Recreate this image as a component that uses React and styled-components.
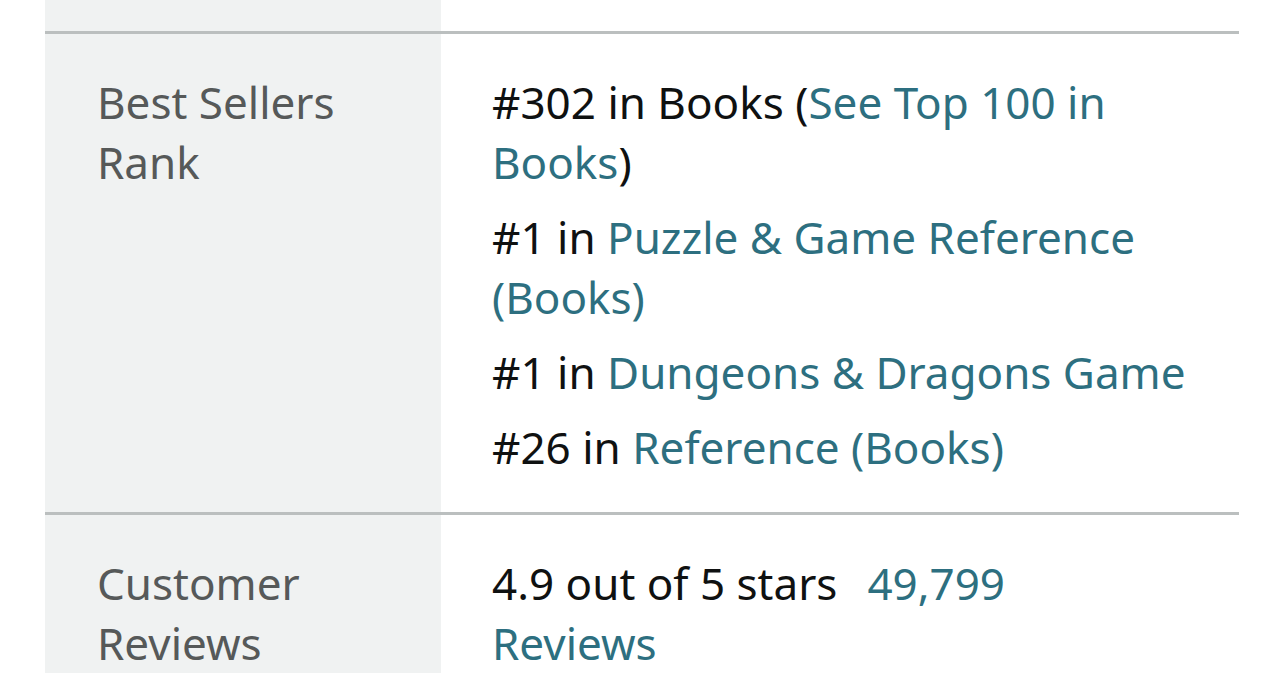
import React from 'react';
import styled, { createGlobalStyle } from 'styled-components';

const rows = [
  {
    label: 'Best Sellers Rank',
    ranks: [
      { pos: '#302', prefix: ' in Books (', link: 'See Top 100 in Books', suffix: ')' },
      { pos: '#1', prefix: ' in ', link: 'Puzzle & Game Reference (Books)' },
      { pos: '#1', prefix: ' in ', link: 'Dungeons & Dragons Game' },
      { pos: '#26', prefix: ' in ', link: 'Reference (Books)' },
    ],
  },
];

export default function App() {
  return (
    <>
      <GlobalStyle />
      <Table>
        <Row>
          <Label flush />
          <Value flush />
        </Row>
        {rows.map((row) => (
          <Row key={row.label} bordered>
            <Label>{row.label}</Label>
            <Value>
              {row.ranks.map((rank, index) => (
                <Rank key={index}>
                  {rank.pos}
                  {rank.prefix}
                  <Link>{rank.link}</Link>
                  {rank.suffix}
                </Rank>
              ))}
            </Value>
          </Row>
        ))}
        <Row bordered>
          <Label>Customer Reviews</Label>
          <Value>
            <Rank>
              4.9 out of 5 stars
              <ReviewLink>
                49,799
                <br />
                Reviews
              </ReviewLink>
            </Rank>
          </Value>
        </Row>
      </Table>
    </>
  );
}

const GlobalStyle = createGlobalStyle`
body {
  margin: 0;
  background: #fff;
  font-family: "Noto Sans", "Open Sans", sans-serif;
  overflow: hidden;
}
`;

const Table = styled.div`
margin-left: 45px;
width: 1194px;
`;

const Row = styled.div`
display: grid;
grid-template-columns: 396px 1fr;
border-top: ${(props) => (props.bordered ? '3px solid #bbbfbf' : 'none')};
min-height: 31px;
`;

const Label = styled.div`
background: #f0f2f2;
color: #565959;
font-size: 44px;
line-height: 60px;
padding: ${(props) => (props.flush ? '0' : '38px 40px 35px 52px')};
`;

const Value = styled.div`
color: #0f1111;
font-size: 44px;
line-height: 60px;
padding: ${(props) => (props.flush ? '0' : '38px 45px 35px 51px')};
display: flex;
flex-direction: column;
gap: 15px;
`;

const Rank = styled.div`
`;

const Link = styled.span`
color: #2d6f80;
`;

const ReviewLink = styled(Link)`
margin-left: 30px;
`;
